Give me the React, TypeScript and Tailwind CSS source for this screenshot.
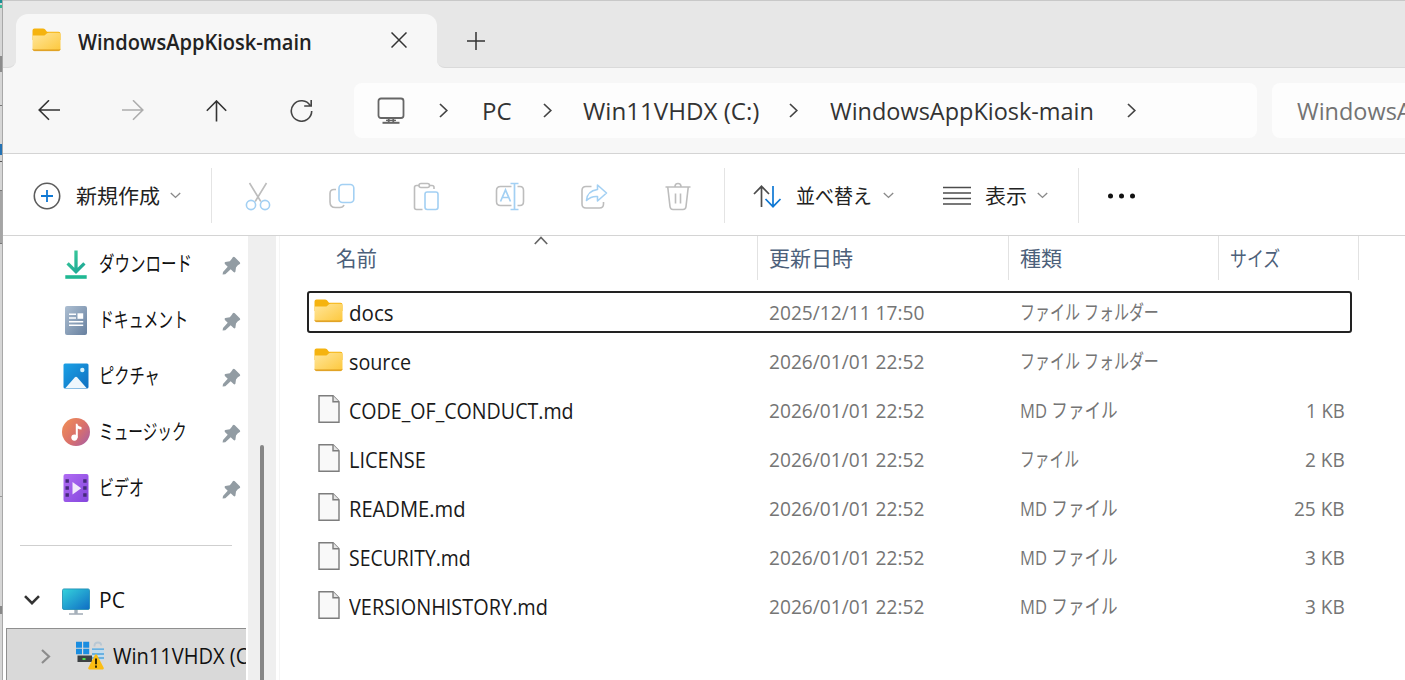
import React, { useLayoutEffect, useRef, useState } from 'react';

// Keeps a label at a fixed column width by squeezing or stretching the glyphs
const FitText: React.FC<{ w: number, className?: string, children: React.ReactNode }> = ({ w, className = "", children }) => {
    const ref = useRef<HTMLSpanElement>(null);
    const [ratio, setRatio] = useState<number>(1);

    useLayoutEffect(() => {
        if (ref.current) {
            setRatio(w / ref.current.offsetWidth);
        }
    }, [w]);

    return (
        <div className={`shrink-0 whitespace-nowrap ${className}`} style={{ width: w }}>
            <span ref={ref} className="inline-block origin-left" style={{ transform: `scaleX(${ratio})` }}>{children}</span>
        </div>
    );
};

const FolderIcon: React.FC = () => (
    <svg width="29" height="24" viewBox="0 0 29 24" className="shrink-0">
        <defs>
            <linearGradient id="folder" x1="0" y1="0" x2="1" y2="1">
                <stop offset="0" stopColor="#ffe69c" />
                <stop offset="1" stopColor="#fdc83c" />
            </linearGradient>
        </defs>
        <path d="M.5 2.5a2 2 0 0 1 2-2H11q1.2 0 2 .8l2 2.4h11.5a2 2 0 0 1 2 2V12H.5z" fill="#f5b30f" />
        <path d="M.5 7.6h10.6q1.4 0 2.3-.9l1.6-1.4q.8-.6 1.8-.6h9.7a2 2 0 0 1 2 2v14a2 2 0 0 1-2 2h-24a2 2 0 0 1-2-2z" fill="url(#folder)" />
        <path d="M.7 21.3q.5 1.4 1.8 1.4h24q1.3 0 1.8-1.4-.6.5-1.8.5h-24q-1.2 0-1.8-.5z" fill="#d99a1c" stroke="#e0a020" strokeWidth=".6" />
    </svg>
);

const FileIcon: React.FC = () => (
    <svg width="22" height="28" viewBox="0 0 22 28" className="shrink-0">
        <path d="M1 .8h14l6 6v20.4H1z" fill="#f9f9f9" stroke="#7d7d7d" strokeWidth="1.4" />
        <path d="M15 .8v6h6" fill="#e4e4e4" stroke="#7d7d7d" strokeWidth="1.4" />
    </svg>
);

const ChevronRight: React.FC<{ className?: string }> = ({ className = "" }) => (
    <svg width="9" height="15" viewBox="0 0 9 15" fill="none" stroke="#444" strokeWidth="1.7" className={`shrink-0 ${className}`}>
        <path d="M1 1l6.8 6.5L1 14" />
    </svg>
);

const ChevronDown: React.FC = () => (
    <svg width="11" height="7" viewBox="0 0 11 7" fill="none" stroke="#8a8a8a" strokeWidth="1.4" className="shrink-0">
        <path d="M.8 1l4.7 4.4L10.2 1" />
    </svg>
);

const PinIcon: React.FC = () => (
    <svg width="19" height="19" viewBox="0 0 19 19" fill="#929ca3" className="shrink-0">
        <path d="M10.8 1.2q1-1.1 2 0l5 5q.9 1 0 1.9l-2 1.2-1.8 2.2-.6 4.3q-.7 1.3-1.8.3l-2.9-2.8L3.300 18.200 .6 18.600 1 16l4.700-5.300-2.800-2.800q-.9-1.100.4-1.800l4.500-.9L9.700 3z" />
    </svg>
);

const MonitorOutline: React.FC = () => (
    <svg width="28" height="28" viewBox="0 0 28 28" fill="none" stroke="#666" strokeWidth="1.8" className="shrink-0">
        <rect x="1.5" y="1.5" width="25" height="19.5" rx="2.5" />
        <path d="M11.7 21v4.5M16.3 21v4.5" />
        <path d="M5.5 25.8h17" strokeWidth="2" />
        <path d="M9 23.4h10" strokeWidth="1.4" />
    </svg>
);

const Download = () => (
    <svg width="22" height="29" viewBox="0 0 22 29" fill="none">
        <defs>
            <linearGradient id="dl" gradientUnits="userSpaceOnUse" x1="0" y1="0" x2="22" y2="29">
                <stop offset="0" stopColor="#3ecf9a" />
                <stop offset="1" stopColor="#129b94" />
            </linearGradient>
        </defs>
        <path d="M11 .5v20.5M2.6 13.3L11 21.6l8.4-8.3" stroke="url(#dl)" strokeWidth="3.3" />
        <path d="M.3 27h21.4" stroke="#20b893" strokeWidth="3.6" />
    </svg>
);

const Documents = () => (
    <svg width="22" height="29" viewBox="0 0 22 29">
        <defs>
            <linearGradient id="doc" x1="0" y1="0" x2="1" y2="1">
                <stop offset="0" stopColor="#adbfd2" />
                <stop offset="1" stopColor="#67809f" />
            </linearGradient>
        </defs>
        <rect width="22" height="29" rx="2" fill="url(#doc)" />
        <path d="M4 8.3h7M4 12h7M4 15.7h14.2M4 19.3h14.2" stroke="#fff" strokeWidth="1.6" />
        <rect x="12.5" y="7.3" width="5.7" height="5.5" fill="#fff" />
    </svg>
);

const Pictures = () => (
    <svg width="26" height="26" viewBox="0 0 26 26">
        <defs>
            <linearGradient id="pic" x1="0" y1="0" x2="1" y2="1">
                <stop offset="0" stopColor="#1ba1e6" />
                <stop offset="1" stopColor="#0f6fc0" />
            </linearGradient>
        </defs>
        <rect x=".5" y=".5" width="25" height="25" rx="1.5" fill="url(#pic)" />
        <path d="M2.5 25L11.7 14.5q1.3-1.3 2.6 0L23.5 25z" fill="#eef7fd" />
        <circle cx="19.3" cy="7" r="2.2" fill="#d3f0fb" />
    </svg>
);

const Music = () => (
    <svg width="28" height="28" viewBox="0 0 28 28">
        <defs>
            <linearGradient id="mus" x1="0" y1="0.2" x2="1" y2="1">
                <stop offset="0" stopColor="#ee8c58" />
                <stop offset=".5" stopColor="#d9706c" />
                <stop offset="1" stopColor="#a45ca8" />
            </linearGradient>
        </defs>
        <circle cx="14" cy="14" r="14" fill="url(#mus)" />
        <circle cx="12.4" cy="19.6" r="3.1" fill="#fff" />
        <path d="M13.8 5.8h1.6q.4 2.7 4.1 3.2v2.6q-2.4 0-3.7-1v9.2h-2z" fill="#fff" />
    </svg>
);

const Video = () => (
    <svg width="26" height="28" viewBox="0 0 26 28">
        <defs>
            <linearGradient id="vid" x1="0" y1="0" x2="1" y2="1">
                <stop offset="0" stopColor="#b06cf3" />
                <stop offset="1" stopColor="#8446dd" />
            </linearGradient>
        </defs>
        <rect x=".5" width="25" height="28" rx="2" fill="url(#vid)" />
        <path d="M2.5 5.2h3.4v3.6H2.5zM2.5 12.2h3.4v3.6H2.5zM2.5 19.2h3.4v3.6H2.5zM20.2 5.2h3.4v3.6h-3.4zM20.2 12.2h3.4v3.6h-3.4zM20.2 19.2h3.4v3.6h-3.4z" fill="#462a7c" />
        <path d="M9.5 8v12.4l8.7-6.2z" fill="#f1e8fb" />
    </svg>
);

const PcIcon = () => (
    <svg width="28" height="28" viewBox="0 0 28 28" className="shrink-0">
        <defs>
            <linearGradient id="pc" x1="0" y1="0" x2="1" y2="1">
                <stop offset="0" stopColor="#35d3dc" />
                <stop offset="1" stopColor="#0f6cc4" />
            </linearGradient>
        </defs>
        <path d="M12.3 21h3.4v5h-3.400z" fill="#a5b0ba" />
        <path d="M7 26h14" stroke="#a5b0ba" strokeWidth="1.6" />
        <rect x=".5" y=".9" width="27" height="20.6" rx="1.5" fill="url(#pc)" stroke="#1c8bb0" strokeWidth=".8" />
    </svg>
);

const DriveIcon = () => (
    <svg width="30" height="30" viewBox="0 0 30 30" className="shrink-0">
        <path d="M1 .8h6v6H1zM8.200 .8h6v6h-6zM1 7.800h6v5.500H1zM8.200 7.800h6v5.500h-6z" fill="#1a8de0" />
        <path d="M19.500 5.500V4.500q0-3 3.500-3 3.200 0 3.200 3" fill="none" stroke="#b9c8d4" strokeWidth="1.800" />
        <path d="M17 7h12v12H17z" fill="#c4dcec" />
        <path d="M17 8.200h12M17 13h12M17 17h12" stroke="#4da3dc" strokeWidth="1.300" />
        <rect x="2.500" y="14.500" width="14.500" height="6.500" fill="#3c4043" />
        <path d="M7.500 17h3v2h-3z" fill="#4be04b" />
        <path d="M19.800 14.200q1.200-1.800 2.400 0l6.500 12.500q.6 1.800-1 1.800H14.300q-1.600 0-1-1.800z" fill="#fbbd12" />
        <path d="M21 17.500v5.800M21 24.600v2.200" stroke="#3a2b00" strokeWidth="2" />
    </svg>
);

// Command bar icons share a 30px box
const Glyph: React.FC<{ className?: string, children: React.ReactNode }> = ({ className = "", children }) => (
    <svg width="30" height="30" viewBox="0 0 30 30" fill="none" strokeWidth="1.6" className={`shrink-0 ${className}`}>{children}</svg>
);

const GRAY = "#bdbdbd";
const BLUE = "#a3d0f3";

const commands: React.ReactNode[] = [
    <>
        <path d="M6.500 2l11.300 18.500M23.500 2L12.200 20.500" stroke={GRAY} />
        <circle cx="8" cy="24" r="4.600" stroke={BLUE} />
        <circle cx="22" cy="24" r="4.600" stroke={BLUE} />
    </>,
    <>
        <path d="M9 8.500H7q-4 0-4 4V21q0 5.500 5.500 5.500h4.500q3 0 4-2.500" stroke={GRAY} />
        <rect x="12" y="3.500" width="14.800" height="18" rx="3.500" stroke={BLUE} />
    </>,
    <>
        <path d="M8 4.500H5.500q-2 0-2 2v20q0 2 2 2h6M18.500 4.500h2.500q2 0 2 2v1.500" stroke={GRAY} />
        <rect x="8" y="2.500" width="10.500" height="4" rx="2" stroke={GRAY} />
        <rect x="14" y="11" width="13" height="17.500" rx="2.200" stroke={BLUE} />
    </>,
    <>
        <path d="M16.500 5.500H5.500q-4 0-4 4v11q0 4 4 4h11M22.500 5.500h2.500q3.500 0 3.500 4v11q0 4-3.500 4h-2.500" stroke={GRAY} />
        <path d="M5.500 20.500L10.500 9l5 11.500M7.200 16.500h6.600M19.500 2.500v26M15.500 2.500h8M15.500 28.500h8" stroke={BLUE} strokeWidth="1.700" />
    </>,
    <>
        <path d="M12.500 5.500H7q-4 0-4 4v13.500q0 4 4 4h13.500q4 0 4-4V21" stroke={GRAY} />
        <path d="M18.500 4l9 8-9 8v-4.500q-6.500-.5-11 4 .5-9.500 11-11z" stroke={BLUE} strokeLinejoin="round" />
    </>,
    <>
        <path d="M2.500 6h25M12 5.500q0-3 3-3t3 3M4.800 6.500l2.200 19q.3 3 3 3h10q2.700 0 3-3l2.200-19M12.500 12.500v10M17.500 12.500v10" stroke={GRAY} />
    </>
];

const Divider: React.FC = () => <div className="h-[55px] w-px shrink-0 bg-[#e4e4e4]"></div>;

const pinned = [
    { label: "ダウンロード", w: 93, icon: <Download /> },
    { label: "ドキュメント", w: 89, icon: <Documents /> },
    { label: "ピクチャ", w: 61, icon: <Pictures /> },
    { label: "ミュージック", w: 88, icon: <Music /> },
    { label: "ビデオ", w: 45, icon: <Video /> }
];

const files = [
    { name: "docs", w: 45, date: "2025/12/11 17:50", type: "ファイル フォルダー", tw: 139, size: "", sw: 0, folder: true },
    { name: "source", w: 62, date: "2026/01/01 22:52", type: "ファイル フォルダー", tw: 139, size: "", sw: 0, folder: true },
    { name: "CODE_OF_CONDUCT.md", w: 225, date: "2026/01/01 22:52", type: "MD ファイル", tw: 98, size: "1 KB", sw: 39, folder: false },
    { name: "LICENSE", w: 77, date: "2026/01/01 22:52", type: "ファイル", tw: 59, size: "2 KB", sw: 40, folder: false },
    { name: "README.md", w: 117, date: "2026/01/01 22:52", type: "MD ファイル", tw: 98, size: "25 KB", sw: 51, folder: false },
    { name: "SECURITY.md", w: 122, date: "2026/01/01 22:52", type: "MD ファイル", tw: 98, size: "3 KB", sw: 40, folder: false },
    { name: "VERSIONHISTORY.md", w: 199, date: "2026/01/01 22:52", type: "MD ファイル", tw: 98, size: "3 KB", sw: 40, folder: false }
];

const TabStrip: React.FC = () => (
    <div className="flex h-[68px] items-end border-t border-[#c8c8c8] bg-[#e7e7e7]">
        <div className="h-[54px] w-[13px] shrink-0 bg-[#f7f7f7]">
            <div className="h-full rounded-br-lg border-b border-[#dadada] bg-[#e7e7e7]"></div>
        </div>
        <div className="flex h-[54px] w-[421px] shrink-0 items-center rounded-t-[12px] bg-[#f7f7f7] pl-4">
            <div className="pb-0.5"><FolderIcon /></div>
            <FitText w={234} className="ml-[17px] pt-0.5 text-[21px] leading-7 font-semibold text-[#222]">WindowsAppKiosk-main</FitText>
            <svg width="16" height="16" viewBox="0 0 16 16" stroke="#333" strokeWidth="1.5" className="mb-0.5 ml-[79px]">
                <path d="M.5 .5l15 15M15.500 .5l-15 15" />
            </svg>
        </div>
        <div className="h-[54px] flex-1 bg-[#f7f7f7]">
            <div className="flex h-full items-center rounded-bl-lg border-b border-[#dadada] bg-[#e7e7e7] pt-px pl-[30px]">
                <svg width="18" height="18" viewBox="0 0 18 18" stroke="#333" strokeWidth="1.5">
                    <path d="M9 0v18M0 9h18" />
                </svg>
            </div>
        </div>
    </div>
);

const AddressBar: React.FC = () => (
    <div className="flex h-[85px] items-center bg-[#f7f7f7] text-[24px] leading-8 text-[#333]">
        <svg width="22" height="21" viewBox="0 0 22 21" fill="none" stroke="#333" strokeWidth="1.6" className="ml-[35px] shrink-0">
            <path d="M22 10H1.500M11 .3L1.200 10 11 19.700" />
        </svg>
        <svg width="22" height="21" viewBox="0 0 22 21" fill="none" stroke="#adadad" strokeWidth="1.6" className="ml-[62px] shrink-0">
            <path d="M0 10h21M11 .3l9.800 9.700L11 19.700" />
        </svg>
        <svg width="21" height="22" viewBox="0 0 21 22" fill="none" stroke="#333" strokeWidth="1.6" className="ml-[62px] shrink-0">
            <path d="M10.500 21.500V1M.8 10.800l9.700-9.800 9.700 9.800" />
        </svg>
        <svg width="23" height="23" viewBox="0 0 23 23" fill="none" stroke="#444" strokeWidth="1.6" className="ml-[63px] shrink-0">
            <path d="M20.300 6.800A10.200 10.200 0 1 0 21.700 12M21.200 1v6h-7" />
        </svg>
        <div className="ml-[41px] flex h-[55px] w-[903px] shrink-0 items-center rounded-lg bg-[#fdfdfd] pl-[23px]">
            <MonitorOutline />
            <ChevronRight className="ml-[34px]" />
            <FitText w={30} className="ml-[34px]">PC</FitText>
            <ChevronRight className="ml-[31px]" />
            <FitText w={176} className="ml-[31px]">Win11VHDX (C:)</FitText>
            <ChevronRight className="ml-[30px]" />
            <FitText w={264} className="ml-[32px]">WindowsAppKiosk-main</FitText>
            <ChevronRight className="ml-[33px]" />
        </div>
        <div className="ml-[15px] flex h-[55px] min-w-0 flex-1 items-center overflow-hidden rounded-l-lg bg-[#fdfdfd] pl-[25px] text-[#737373]">
            <FitText w={264}>WindowsAppKiosk-main</FitText>
        </div>
    </div>
);

const CommandBar: React.FC = () => (
    <div className="flex h-[83px] items-center border-y border-[#d4d4d4] bg-white pt-0.5 text-[20.5px] leading-7 text-[#222]">
        <Glyph className="ml-[29px]">
            <circle cx="15" cy="15" r="12.7" stroke="#5c5c5c" />
            <path d="M15 9v12M9 15h12" stroke="#0f78d4" strokeWidth="1.8" />
        </Glyph>
        <FitText w={84} className="ml-[14px]">新規作成</FitText>
        <div className="ml-[10px]"><ChevronDown /></div>
        <div className="ml-[30px]"><Divider /></div>
        <div className="ml-[31px] flex gap-[54px]">
            {commands.map((icon, index) => <Glyph key={index}>{icon}</Glyph>)}
        </div>
        <div className="ml-[31px]"><Divider /></div>
        <Glyph className="ml-[27px]">
            <path d="M9.500 26V5.500M2 13l7.500-7.700L17 13" stroke="#4c4c4c" strokeWidth="1.7" />
            <path d="M21 5v20.500M13.500 18l7.500 7.700 7.500-7.700" stroke="#0f78d4" strokeWidth="1.7" />
        </Glyph>
        <FitText w={76} className="ml-[14px]">並べ替え</FitText>
        <div className="ml-[11px]"><ChevronDown /></div>
        <svg width="28" height="20" viewBox="0 0 28 20" stroke="#4c4c4c" strokeWidth="1.6" className="ml-[49px] shrink-0">
            <path d="M0 1.500h28M0 7h28M0 12.500h28M0 18h28" />
        </svg>
        <FitText w={42} className="ml-[14px]">表示</FitText>
        <div className="ml-[10px]"><ChevronDown /></div>
        <div className="ml-[30px]"><Divider /></div>
        <svg width="30" height="6" viewBox="0 0 30 6" fill="#111" className="ml-7 shrink-0">
            <circle cx="3.500" cy="3" r="2.500" />
            <circle cx="14.500" cy="3" r="2.500" />
            <circle cx="25.500" cy="3" r="2.500" />
        </svg>
    </div>
);

const Sidebar: React.FC = () => (
    <div className="flex w-[277px] shrink-0 border-r border-[#f5f5f5]">
        <div className="w-[244px] shrink-0 overflow-hidden text-[21px] leading-7 text-[#111]">
            {pinned.map((item) => (
                <div key={item.label} className="flex h-14 items-center">
                    <div className="ml-[59px] flex w-7 justify-center">{item.icon}</div>
                    <FitText w={item.w} className="ml-[9px] pb-0.5">{item.label}</FitText>
                    <div className="mr-[6px] ml-auto pt-0.5"><PinIcon /></div>
                </div>
            ))}
            <div className="flex h-14 items-center pt-0.5">
                <div className="ml-[17px] h-px w-[212px] bg-[#cfcfcf]"></div>
            </div>
            <div className="flex h-14 items-center">
                <svg width="16" height="10" viewBox="0 0 16 10" fill="none" stroke="#333" strokeWidth="2.6" className="ml-[21px] shrink-0">
                    <path d="M1 1.200l7 7 7-7" />
                </svg>
                <div className="ml-[22px] pt-1"><PcIcon /></div>
                <FitText w={26} className="ml-[9px]">PC</FitText>
            </div>
            <div className="ml-[3px] flex h-[60px] w-[240px] items-center overflow-hidden border border-r-0 border-[#8f8f8f] bg-[#d9d9d9] pb-1">
                <svg width="10" height="15" viewBox="0 0 10 15" fill="none" stroke="#8c8c8c" strokeWidth="2.2" className="ml-[34px] shrink-0">
                    <path d="M1 1l7 6.500L1 14" />
                </svg>
                <div className="ml-[24px]"><DriveIcon /></div>
                <FitText w={147} className="ml-[8px]">Win11VHDX (C:)</FitText>
            </div>
        </div>
        <div className="ml-px w-7 shrink-0 bg-[#efefef] pt-[209px] pl-3">
            <div className="h-[240px] w-[4px] rounded-t-sm bg-[#868686]"></div>
        </div>
    </div>
);

const FileList: React.FC = () => (
    <div className="flex-1 overflow-hidden text-[21px] leading-7">
        <div className="flex h-[51px] items-start text-[#4c607a]">
            <div className="flex h-11 w-[478px] items-center border-r border-[#e2e2e2] pl-14">
                <FitText w={41}>名前</FitText>
                <svg width="14" height="9" viewBox="0 0 14 9" fill="none" stroke="#666" strokeWidth="1.7" className="mb-[36px] ml-[157px]">
                    <path d="M.8 8L7 1.500 13.200 8" />
                </svg>
            </div>
            <div className="flex h-11 w-[251px] items-center border-r border-[#e2e2e2] pl-[11px]"><FitText w={84}>更新日時</FitText></div>
            <div className="flex h-11 w-[210px] items-center border-r border-[#e2e2e2] pl-[11px]"><FitText w={42}>種類</FitText></div>
            <div className="flex h-11 w-[140px] items-center border-r border-[#e2e2e2] pl-[11px]"><FitText w={50}>サイズ</FitText></div>
        </div>
        {files.map((file, index) => (
            <div key={file.name} className="flex h-[49px] items-center pl-[27px]">
                <div className={`flex h-[42px] w-[1045px] items-center rounded-[3px] border-2 ${index === 0 ? "border-[#222]" : "border-transparent"}`}>
                    <div className="ml-[5px] flex w-[29px] justify-center pb-0.5">{file.folder ? <FolderIcon /> : <FileIcon />}</div>
                    <FitText w={file.w} className="ml-[6px] pt-0.5 text-[#1a1a1a]">{file.name}</FitText>
                    <div className="ml-auto flex w-[581px] shrink-0 pt-px text-[20.5px] text-[#757575]">
                        <FitText w={155} className="mr-[96px]">{file.date}</FitText>
                        <FitText w={file.tw}>{file.type}</FitText>
                        {file.size && <FitText w={file.sw} className="mr-[5px] ml-auto">{file.size}</FitText>}
                    </div>
                </div>
            </div>
        ))}
    </div>
);

const App: React.FC = () => {
    return (
        <div className="flex h-[680px] w-[1405px] overflow-hidden bg-white font-['Open_Sans','Noto_Sans_CJK_JP',sans-serif]">
            <div className="flex w-[3px] shrink-0 flex-col border-r border-[#a8a8a8] bg-[#d6d6d6]">
                <div className="h-[3px] bg-[#1a8f95]"></div>
                <div className="mt-0.5 h-[3px] bg-[#35b795]"></div>
                <div className="mt-[48px] h-4 bg-[#8c8c8c]"></div>
                <div className="mt-[33px] h-px bg-[#777]"></div>
                <div className="mt-[38px] h-[11px] bg-[#2473b5]"></div>
                <div className="mt-[6px] h-px bg-[#555]"></div>
                <div className="mt-[28px] h-[54px] border-y border-[#777] bg-[#a5a5a5]"></div>
                <div className="mt-[252px] h-px bg-[#999]"></div>
                <div className="mt-[109px] h-2 bg-[#888]"></div>
            </div>
            <div className="flex min-w-0 flex-1 flex-col">
                <TabStrip />
                <AddressBar />
                <CommandBar />
                <div className="flex min-h-0 flex-1">
                    <Sidebar />
                    <FileList />
                </div>
            </div>
        </div>
    )
}

export default App;
